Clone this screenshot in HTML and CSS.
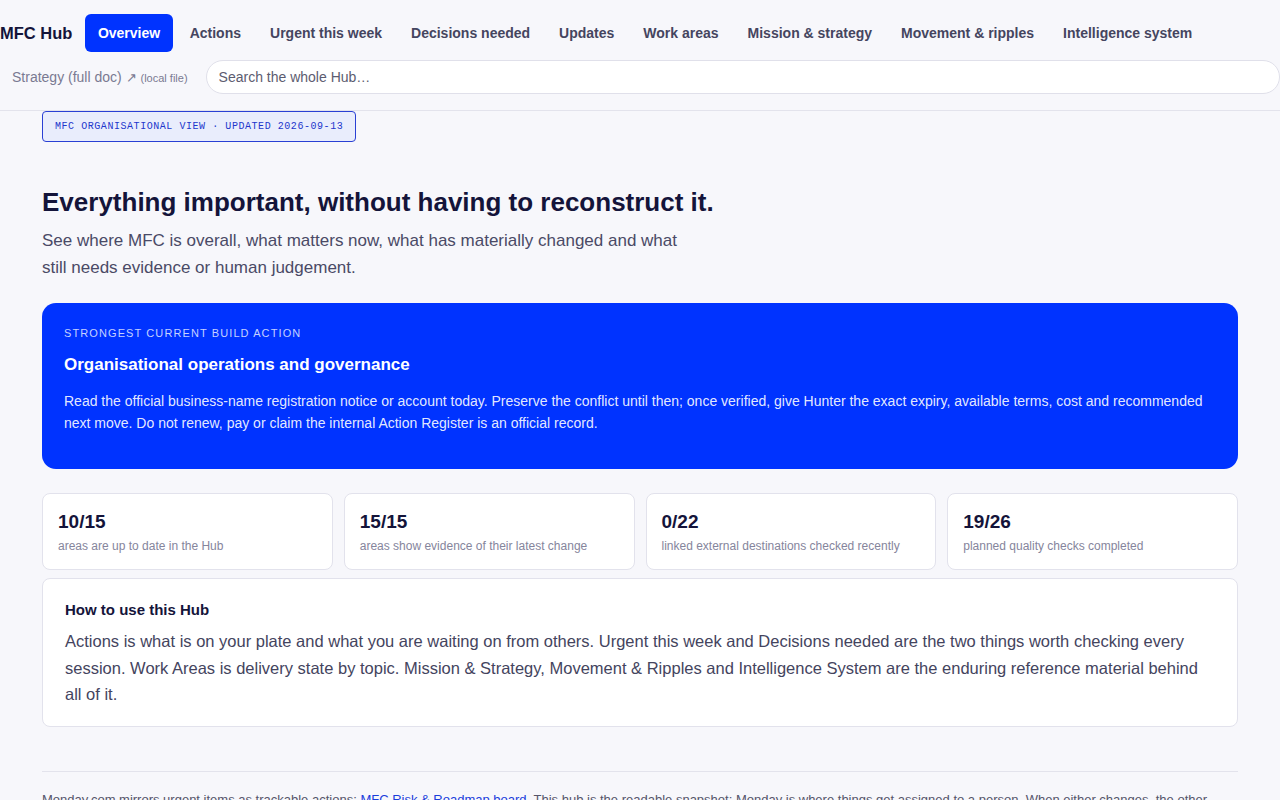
FILE: index.html
```html
<!DOCTYPE html>
<html lang="en">
<head>
<meta charset="utf-8">
<title>MFC Hub</title>
<link rel="stylesheet" href="styles.css">
</head>
<body>
<header class="topbar">
  <nav class="nav">
    <span class="brand">MFC Hub</span>
    <a class="nav-item active" href="#">Overview</a>
    <a class="nav-item" href="#">Actions</a>
    <a class="nav-item" href="#">Urgent this week</a>
    <a class="nav-item" href="#">Decisions needed</a>
    <a class="nav-item" href="#">Updates</a>
    <a class="nav-item" href="#">Work areas</a>
    <a class="nav-item" href="#">Mission &amp; strategy</a>
    <a class="nav-item" href="#">Movement &amp; ripples</a>
    <a class="nav-item" href="#">Intelligence system</a>
  </nav>
  <div class="subrow">
    <a class="doc-link" href="#">Strategy (full doc) <span class="arrow">↗</span> <span class="small">(local file)</span></a>
    <input class="search" type="text" placeholder="Search the whole Hub…">
  </div>
</header>

<main class="main">
  <div class="badge">MFC ORGANISATIONAL VIEW · UPDATED 2026-09-13</div>

  <h1 class="title">Everything important, without having to reconstruct it.</h1>
  <p class="lede">See where MFC is overall, what matters now, what has materially changed and what still needs evidence or human judgement.</p>

  <section class="hero">
    <div class="hero-label">STRONGEST CURRENT BUILD ACTION</div>
    <h2 class="hero-title">Organisational operations and governance</h2>
    <p class="hero-body">Read the official business-name registration notice or account today. Preserve the conflict until then; once verified, give Hunter the exact expiry, available terms, cost and recommended next move. Do not renew, pay or claim the internal Action Register is an official record.</p>
  </section>

  <section class="stats">
    <div class="stat"><div class="stat-num">10/15</div><div class="stat-label">areas are up to date in the Hub</div></div>
    <div class="stat"><div class="stat-num">15/15</div><div class="stat-label">areas show evidence of their latest change</div></div>
    <div class="stat"><div class="stat-num">0/22</div><div class="stat-label">linked external destinations checked recently</div></div>
    <div class="stat"><div class="stat-num">19/26</div><div class="stat-label">planned quality checks completed</div></div>
  </section>

  <section class="howto">
    <h3 class="howto-title">How to use this Hub</h3>
    <p class="howto-body">Actions is what is on your plate and what you are waiting on from others. Urgent this week and Decisions needed are the two things worth checking every session. Work Areas is delivery state by topic. Mission &amp; Strategy, Movement &amp; Ripples and Intelligence System are the enduring reference material behind all of it.</p>
  </section>

  <footer class="foot">
    <p>Monday.com mirrors urgent items as trackable actions: <a href="#">MFC Risk &amp; Roadmap board</a>. This hub is the readable snapshot; Monday is where things get assigned to a person. When either changes, the other should be updated so the two stay in step.</p>
  </footer>
</main>
</body>
</html>
```

FILE: styles.css
```css
* { box-sizing: border-box; }

html, body {
  margin: 0;
  padding: 0;
  background: #f7f7fb;
  font-family: "Liberation Sans", Arial, sans-serif;
  color: #14143a;
}

.topbar {
  padding: 14px 0 16px 0;
  border-bottom: 1px solid #e3e3ec;
}

.nav {
  display: flex;
  align-items: center;
  gap: 5px;
  height: 38px;
}

.brand {
  font-size: 16.5px;
  font-weight: 700;
  color: #14143a;
  margin-right: 8px;
}

.nav-item {
  display: flex;
  align-items: center;
  height: 38px;
  padding: 0 12px;
  font-size: 14px;
  font-weight: 700;
  color: #45455f;
  text-decoration: none;
  border-radius: 6px;
  white-space: nowrap;
}

.nav-item.active {
  background: #0033ff;
  color: #ffffff;
  padding: 0 12.5px;
}

.subrow {
  display: flex;
  align-items: center;
  gap: 6px;
  margin-top: 8px;
}

.doc-link {
  padding: 0 12px;
  font-size: 14px;
  color: #7a7a92;
  text-decoration: none;
  white-space: nowrap;
}

.doc-link .arrow { font-size: 13px; }
.doc-link .small { font-size: 11px; }

.search {
  flex: 1;
  height: 34px;
  border: 1px solid #e0e0ea;
  border-radius: 17px;
  background: #ffffff;
  padding: 0 12px;
  font-family: "Liberation Sans", Arial, sans-serif;
  font-size: 14px;
  color: #333;
  outline: none;
}

.search::placeholder { color: #5c5c70; }

.main {
  padding: 0 42px;
}

.badge {
  display: inline-block;
  padding: 9px 12px 8px;
  border: 1px solid #2a40d4;
  border-radius: 4px;
  background: #e9edfc;
  color: #2236cc;
  font-family: "Liberation Mono", "DejaVu Sans Mono", monospace;
  font-size: 10px;
  letter-spacing: 0.55px;
  line-height: 12px;
}

.title {
  margin: 44px 0 0 0;
  font-size: 26px;
  line-height: 32px;
  font-weight: 700;
  color: #14143a;
}

.lede {
  margin: 9px 0 0 0;
  max-width: 660px;
  font-size: 17px;
  line-height: 27px;
  color: #4a4a66;
}

.hero {
  margin-top: 22px;
  background: #0033ff;
  border-radius: 14px;
  padding: 22px 22px 23px;
  color: #ffffff;
}

.hero-label {
  font-size: 11px;
  letter-spacing: 1.1px;
  line-height: 16px;
  color: rgba(255, 255, 255, 0.78);
}

.hero-title {
  margin: 13px 0 0 0;
  font-size: 17px;
  line-height: 22px;
  font-weight: 700;
}

.hero-body {
  margin: 14px 0 12px 0;
  font-size: 14px;
  line-height: 22px;
  color: rgba(255, 255, 255, 0.9);
}

.stats {
  margin-top: 24px;
  display: grid;
  grid-template-columns: repeat(4, 1fr);
  gap: 11px;
}

.stat {
  background: #ffffff;
  border: 1px solid #e2e2ec;
  border-radius: 8px;
  padding: 16px 15px 15px;
  height: 77px;
}

.stat-num {
  font-size: 19px;
  font-weight: 700;
  line-height: 24px;
  color: #14143a;
}

.stat-label {
  margin-top: 4px;
  font-size: 12px;
  line-height: 16px;
  color: #85859c;
}

.howto {
  margin-top: 8px;
  background: #ffffff;
  border: 1px solid #e2e2ec;
  border-radius: 8px;
  padding: 20px 22px 18px;
}

.howto-title {
  margin: 0;
  font-size: 15px;
  line-height: 22px;
  font-weight: 700;
  color: #14143a;
}

.howto-body {
  margin: 7px 0 0 0;
  font-size: 16.5px;
  line-height: 26.5px;
  color: #44445e;
}

.foot {
  margin-top: 44px;
  border-top: 1px solid #e3e3ec;
  padding-top: 18px;
}

.foot p {
  margin: 0;
  font-size: 13px;
  line-height: 20px;
  color: #55556a;
}

.foot a {
  color: #1a3ddb;
}
```
